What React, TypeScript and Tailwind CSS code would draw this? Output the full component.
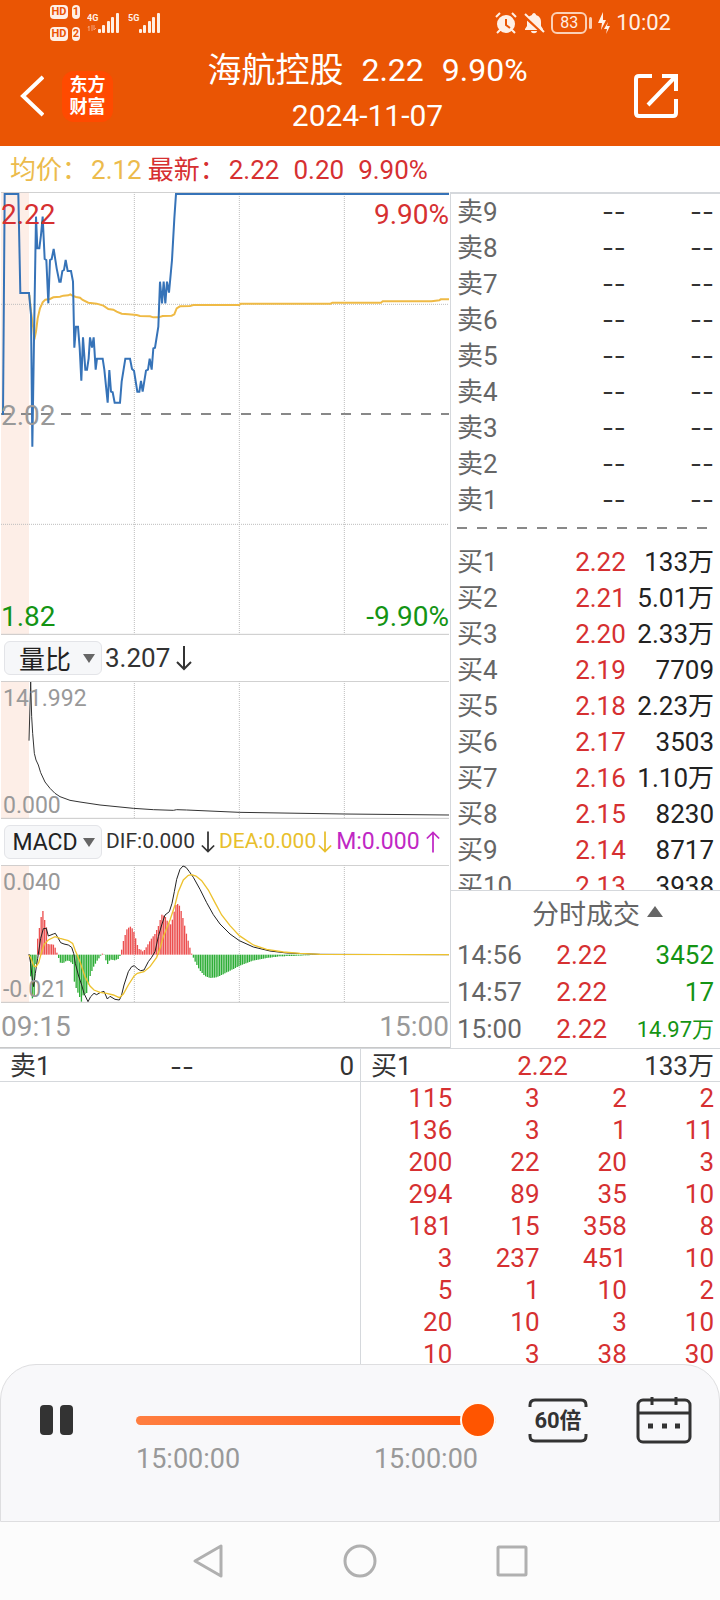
import { useState } from "react";

type Point = [number, number];
type Level = { label: string; price: string; volume: string };

const sells: Level[] = [9, 8, 7, 6, 5, 4, 3, 2, 1].map((n) => ({ label: `卖${n}`, price: "--", volume: "--" }));

const buys: Level[] = [
    { label: "买1", price: "2.22", volume: "133万" },
    { label: "买2", price: "2.21", volume: "5.01万" },
    { label: "买3", price: "2.20", volume: "2.33万" },
    { label: "买4", price: "2.19", volume: "7709" },
    { label: "买5", price: "2.18", volume: "2.23万" },
    { label: "买6", price: "2.17", volume: "3503" },
    { label: "买7", price: "2.16", volume: "1.10万" },
    { label: "买8", price: "2.15", volume: "8230" },
    { label: "买9", price: "2.14", volume: "8717" },
    { label: "买10", price: "2.13", volume: "3938" },
];

const trades = [
    { time: "14:56", price: "2.22", volume: "3452" },
    { time: "14:57", price: "2.22", volume: "17" },
    { time: "15:00", price: "2.22", volume: "14.97万" },
];

const queue = [
    [115, 3, 2, 2],
    [136, 3, 1, 11],
    [200, 22, 20, 3],
    [294, 89, 35, 10],
    [181, 15, 358, 8],
    [3, 237, 451, 10],
    [5, 1, 10, 2],
    [20, 10, 3, 10],
    [10, 3, 38, 30],
];

const priceLine: Point[] = [
    [9, 690], [14, 27], [55, 27], [61, 324], [87, 324], [93, 390], [97, 785], [103, 400], [108, 95], [112, 190], [118, 190],
    [123, 150], [128, 95], [134, 222], [139, 225], [145, 355], [150, 225], [155, 222], [161, 192], [170, 250], [178, 290],
    [182, 290], [187, 258], [192, 255], [197, 225], [203, 258], [213, 258], [219, 290], [223, 488], [228, 425], [234, 425],
    [239, 488], [244, 587], [249, 457], [256, 554], [261, 554], [266, 520], [270, 457], [276, 488], [281, 457], [287, 554],
    [291, 521], [308, 521], [313, 554], [323, 653], [328, 555], [333, 620], [338, 622], [344, 653], [360, 653], [365, 590],
    [376, 521], [390, 521], [396, 552], [402, 557], [412, 620], [418, 620], [423, 588], [428, 620], [438, 557], [444, 554],
    [449, 521], [455, 554], [460, 490], [465, 488], [475, 425], [480, 290], [486, 355], [491, 290], [496, 355], [501, 290],
    [507, 323], [516, 225], [523, 100], [528, 27], [1347, 27],
];

const averageLine: Point[] = [
    [88, 330], [93, 380], [100, 430], [103, 464], [108, 440], [113, 400], [120, 370], [128, 352], [136, 344], [150, 342],
    [160, 337], [180, 335], [190, 332], [205, 331], [211, 328], [217, 332], [228, 336], [240, 338], [248, 345], [265, 353],
    [290, 356], [310, 362], [325, 372], [340, 374], [350, 380], [365, 386], [385, 388], [410, 390], [420, 393], [450, 394],
    [460, 397], [475, 397], [488, 393], [515, 392], [523, 388], [530, 370], [540, 364], [570, 363], [580, 360], [718, 360],
    [722, 356], [992, 356], [997, 353], [1143, 353], [1148, 349], [1295, 349], [1318, 346], [1322, 343], [1347, 343],
];

const ratioLine: Point[] = [
    [87, 452], [92, 276], [95, 380], [98, 430], [103, 490], [108, 510], [115, 525], [122, 548], [135, 576], [150, 595],
    [165, 610], [180, 620], [210, 631], [240, 636], [300, 645], [400, 655], [460, 659], [520, 661], [530, 659], [560, 660],
    [718, 667], [1033, 672], [1347, 675],
];

const difLine: Point[] = [
    [87, 402], [92, 430], [97, 480], [101, 500], [106, 460], [113, 415], [122, 355], [130, 326], [139, 325], [145, 348],
    [160, 342], [166, 340], [172, 350], [182, 368], [192, 372], [205, 375], [215, 382], [221, 400], [226, 430], [235, 465],
    [245, 495], [252, 520], [264, 545], [272, 530], [282, 520], [290, 524], [300, 518], [312, 514], [322, 537], [330, 529],
    [345, 538], [358, 540], [364, 528], [372, 495], [385, 455], [395, 440], [403, 437], [413, 447], [422, 452], [432, 450],
    [445, 425], [455, 412], [465, 395], [475, 350], [485, 315], [495, 285], [508, 275], [516, 250], [523, 215], [530, 178],
    [540, 148], [549, 138], [558, 142], [568, 155], [580, 172], [600, 208], [620, 248], [640, 284], [660, 312], [690, 342],
    [718, 362], [760, 381], [810, 393], [860, 399], [960, 403], [1347, 404],
];

const deaLine: Point[] = [
    [87, 405], [93, 415], [101, 438], [108, 440], [116, 428], [125, 395], [133, 372], [145, 360], [165, 350], [180, 355],
    [205, 362], [218, 370], [226, 392], [240, 425], [255, 470], [270, 498], [282, 510], [300, 517], [320, 520], [340, 525],
    [358, 533], [370, 522], [385, 495], [403, 467], [412, 460], [432, 455], [450, 440], [470, 412], [480, 385], [490, 350],
    [510, 300], [525, 255], [535, 215], [550, 180], [565, 166], [575, 164], [588, 168], [605, 182], [625, 210], [645, 248],
    [665, 285], [690, 317], [718, 347], [760, 375], [800, 388], [850, 396], [900, 400], [960, 403], [1347, 404],
];

// histogram outline, sampled into bars below
const macdShape: Point[] = [
    [88, 0], [96, -130], [102, -135], [107, -40], [112, 42], [118, 78], [123, 110], [128, 135], [133, 108], [139, 85],
    [144, 32], [160, 30], [165, 22], [170, 8], [173, 0], [180, -24], [190, -25], [200, -18], [210, -20], [218, -28],
    [223, -80], [230, -105], [240, -130], [244, -142], [249, -122], [260, -115], [270, -65], [280, -38], [290, -20],
    [300, -6], [308, 4], [312, 0], [322, -30], [330, -15], [345, -17], [355, -13], [360, -4], [364, 10], [370, 40],
    [380, 75], [390, 85], [400, 75], [408, 45], [415, 18], [425, 14], [430, 8], [440, 25], [450, 42], [465, 62],
    [475, 85], [485, 120], [495, 115], [505, 95], [513, 90], [520, 115], [526, 148], [532, 153], [540, 145], [550, 105],
    [560, 60], [570, 20], [576, 0], [585, -20], [600, -48], [615, -64], [630, -70], [650, -68], [665, -61], [718, -34],
    [760, -18], [800, -10], [840, -5], [900, -3], [960, 0],
];

const toPoints = (points: Point[]) => points.map((p) => p.join(",")).join(" ");

const sampleAt = (points: Point[], x: number) => {
    const i = points.findIndex((p) => p[0] >= x);
    if (i <= 0) return 0;
    const [x0, y0] = points[i - 1];
    const [x1, y1] = points[i];
    return y0 + ((y1 - y0) * (x - x0)) / (x1 - x0);
};

const bars = Array.from({ length: 167 }, (_, i) => {
    const x = 92 + i * 5.25;
    return { x, value: Math.round(sampleAt(macdShape, x)) };
});

function Grid({ top, bottom }: { top: number; bottom: number }) {
    return (
        <>
            <rect x="3" y={top} width="84" height={bottom - top} fill="#fdeee7" />
            {[403, 718, 1033].map((x) => (
                <line key={x} x1={x} x2={x} y1={top} y2={bottom} stroke="#bdbdbd" strokeWidth="3" strokeDasharray="3 3" />
            ))}
            <path d={`M3 ${top + 1}H1347M3 ${bottom - 2}H1347`} stroke="#c8c8c8" strokeWidth="3" />
        </>
    );
}

function Arrow({ up, className }: { up?: boolean; className?: string }) {
    return (
        <svg viewBox="0 0 16 26" className={className} fill="none" stroke="currentColor" strokeWidth="2">
            <path d={up ? "M8 25V2M1 9l7-7 7 7" : "M8 1v23M1 17l7 7 7-7"} />
        </svg>
    );
}

function IndicatorSelect({ name, options, className }: { name: string; options: string[]; className: string }) {
    return (
        <div className="relative ml-1 h-[34px] w-[98px] shrink-0">
            <select
                aria-label={name}
                className={`h-full w-full appearance-none rounded-md border border-[#e3e4e8] bg-[#f6f7f9] pr-4 text-center text-[#222] ${className}`}
            >
                {options.map((o) => (
                    <option key={o}>{o}</option>
                ))}
            </select>
            <svg viewBox="0 0 12 9" className="pointer-events-none absolute top-[13px] right-[7px] h-[9px] w-3" fill="#666">
                <path d="M0 0h12L6 9z" />
            </svg>
        </div>
    );
}

function LevelTable({ levels, caption }: { levels: Level[]; caption: string }) {
    return (
        <table className="w-full table-fixed" aria-label={caption}>
            <tbody>
                {levels.map(({ label, price, volume }) => (
                    <tr key={label} className="h-9 leading-9">
                        <th scope="row" className="w-[30%] p-0 pl-[6px] text-left font-normal whitespace-nowrap text-[#666]">{label}</th>
                        <td className={price === "--" ? "w-[35%] p-0 text-right font-['Inter'] text-[#333]" : "w-[35%] p-0 text-right text-[#d63031]"}>
                            {price}
                        </td>
                        <td className={volume === "--" ? "p-0 pr-[6px] text-right font-['Inter'] text-[#333]" : "p-0 pr-[6px] text-right whitespace-nowrap text-[#222]"}>
                            {volume}
                        </td>
                    </tr>
                ))}
            </tbody>
        </table>
    );
}

function Signal({ label, faded }: { label: string; faded?: boolean }) {
    return (
        <svg viewBox="0 0 34 22" className="h-[22px] w-[34px]" fill="#fff0e6">
            <text x="0" y="9" fontSize="9" fontWeight="700" fontFamily="Roboto, sans-serif">{label}</text>
            {faded && <path d="M2 19v-5l-1 2M5 19v-6M7 13v5l2-2" stroke="#f4a27a" strokeWidth="1" fill="none" />}
            <rect x="11" y="17" width="3" height="4" rx="1" />
            <rect x="15" y="13" width="3" height="8" rx="1" />
            <rect x="20" y="9" width="3" height="12" rx="1" />
            <rect x="24" y="5" width="3" height="16" rx="1" />
            <rect x="29" y="1" width="3" height="20" rx="1" />
        </svg>
    );
}

function HdBadge({ n }: { n: string }) {
    return (
        <div className="flex gap-1 text-[11px] leading-[14px] font-bold text-[#ea5504]">
            <span className="w-[18px] rounded-sm bg-[#fff0e6] text-center">HD</span>
            <span className="w-2 rounded-sm bg-[#fff0e6] text-center">{n}</span>
        </div>
    );
}

function StatusBar() {
    return (
        <div className="flex h-[46px] items-center justify-between pr-[49px] pl-[50px] text-[#fff0e6]">
            <div className="flex items-center gap-[7px]">
                <div className="flex flex-col gap-2">
                    <HdBadge n="1" />
                    <HdBadge n="2" />
                </div>
                <Signal label="4G" faded />
                <Signal label="5G" />
            </div>
            <div className="flex items-center gap-[6px]">
                <svg viewBox="0 0 22 22" className="size-[22px]" fill="none" stroke="currentColor" strokeWidth="2">
                    <circle cx="11" cy="12" r="9" fill="currentColor" stroke="none" />
                    <path d="M1 5l4-4M21 5l-4-4M5 18l-3 3M17 18l3 3" />
                    <path d="M11 7v6l4 3" stroke="#ea5504" />
                </svg>
                <svg viewBox="0 0 22 22" className="size-[22px]" fill="currentColor">
                    <path d="M11 1c1 0 2 1 2 2 3 1 5 3 5 7v4l2 3v1H2v-1l2-3v-4c0-4 2-6 5-7 0-1 1-2 2-2zM8 19h6c0 3-6 3-6 0z" />
                    <path d="M1 4l19 17" stroke="#ea5504" strokeWidth="3" />
                    <path d="M2 2l19 18" stroke="currentColor" strokeWidth="2" />
                </svg>
                <div className="flex items-center gap-[2px]">
                    <span className="h-[22px] w-9 rounded-md border-2 border-[#fbd0b6] text-center text-base leading-[18px]">83</span>
                    <span className="h-3 w-[3px] rounded-sm bg-[#fbd0b6]" />
                </div>
                <svg viewBox="0 0 12 22" className="h-[22px] w-3" fill="currentColor">
                    <path d="M5 0L0 11h4l-1 7 5-10H5zM10 10l-4 7h3l-1 5 4-8h-3z" />
                </svg>
                <time className="text-[22px] leading-6">10:02</time>
            </div>
        </div>
    );
}

function TopBar() {
    return (
        <div className="flex h-[100px] items-center pr-[42px] pl-5 text-white">
            <button aria-label="返回" className="mr-[18px]">
                <svg viewBox="0 0 24 42" className="h-[42px] w-6" fill="none" stroke="currentColor" strokeWidth="4">
                    <path d="M23 2L3 21l20 19" />
                </svg>
            </button>
            <div className="flex h-[51px] w-[51px] flex-col items-center justify-center rounded-xl bg-[#ff4a00] text-lg leading-[22px] font-bold">
                <span>东方</span>
                <span>财富</span>
            </div>
            <div className="flex flex-1 flex-col items-center pb-[6px] leading-[45px]">
                <h1 className="flex gap-[18px] text-[32px]">
                    <span className="text-[34px]">海航控股</span>
                    <span>2.22</span>
                    <span>9.90%</span>
                </h1>
                <p className="text-[30px]">2024-11-07</p>
            </div>
            <button aria-label="分享" className="pl-3">
                <svg viewBox="0 0 44 44" className="size-11" fill="none" stroke="currentColor" strokeWidth="4">
                    <path d="M18 2H5Q2 2 2 5v34q0 3 3 3h34q3 0 3-3V25M28 2h14v15M41 3L14 31" />
                </svg>
            </button>
        </div>
    );
}

function Charts() {
    return (
        <div className="w-5/8">
            <div className="relative">
                <svg viewBox="0 21 1350 1329" className="block w-full" fill="none">
                    <Grid top={21} bottom={1350} />
                    <path d="M3 358H1347M3 1018H1347" stroke="#bdbdbd" strokeWidth="3" strokeDasharray="3 3" />
                    <path d="M3 687H1347" stroke="#888" strokeWidth="6" strokeDasharray="30 30" />
                    <polyline points={toPoints(averageLine)} stroke="#efba45" strokeWidth="6" />
                    <polyline points={toPoints(priceLine)} stroke="#3673b8" strokeWidth="6" />
                </svg>
                <div className="absolute inset-x-px inset-y-0 text-[28px] leading-8">
                    <div className="absolute inset-x-0 top-[7px] flex justify-between text-[#d63031]">
                        <span>2.22</span>
                        <span>9.90%</span>
                    </div>
                    <span className="absolute top-1/2 left-0 -mt-[14px] text-[#999]">2.02</span>
                    <div className="absolute inset-x-0 bottom-[2px] flex justify-between text-[#149414]">
                        <span>1.82</span>
                        <span>-9.90%</span>
                    </div>
                </div>
            </div>

            <div className="flex h-[46px] items-center text-[#333]">
                <IndicatorSelect name="指标一" options={["量比", "成交量"]} className="font-['Noto_Sans_CJK_SC'] text-[26px] leading-8" />
                <span className="ml-[3px]">3.207</span>
                <Arrow className="ml-[6px] h-[26px] w-4" />
            </div>

            <div className="relative">
                <svg viewBox="0 273 1350 414" className="block w-full" fill="none">
                    <Grid top={273} bottom={687} />
                    <polyline points={toPoints(ratioLine)} stroke="#333" strokeWidth="3" />
                </svg>
                <div className="absolute inset-y-0 left-[3px] flex flex-col justify-between pt-[6px] pb-px text-[23px] leading-6 text-[#999]">
                    <span>141.992</span>
                    <span>0.000</span>
                </div>
            </div>

            <div className="flex h-[46px] items-center text-[21px]">
                <IndicatorSelect name="指标二" options={["MACD", "KDJ"]} className="text-[23px]" />
                <span className="ml-1 text-[#333]">DIF:0.000</span>
                <Arrow className="ml-[6px] h-6 w-[14px] shrink-0 text-[#333]" />
                <span className="ml-1 text-[#e8bf2c]">DEA:0.000</span>
                <Arrow className="ml-[2px] h-6 w-[14px] shrink-0 text-[#e8bf2c]" />
                <span className="ml-1 text-[23px] text-[#c028c4]">M:0.000</span>
                <Arrow up className="ml-[6px] h-6 w-[14px] shrink-0 text-[#c028c4]" />
            </div>

            <div className="relative">
                <svg viewBox="0 135 1350 414" className="block w-full" fill="none">
                    <Grid top={135} bottom={549} />
                    {bars.map(({ x, value }) => (
                        <rect
                            key={x}
                            x={x - 2}
                            y={value > 0 ? 404 - value : 404}
                            width="4"
                            height={Math.abs(value)}
                            fill={value > 0 ? "#ec5050" : "#2fae38"}
                        />
                    ))}
                    <polyline points={toPoints(difLine)} stroke="#222" strokeWidth="3" />
                    <polyline points={toPoints(deaLine)} stroke="#edc22f" strokeWidth="4" />
                </svg>
                <div className="absolute inset-y-0 left-[3px] flex flex-col justify-between pt-[6px] pb-px text-[23px] leading-6 text-[#999]">
                    <span>0.040</span>
                    <span>-0.021</span>
                </div>
            </div>

            <div className="flex h-[45px] items-center justify-between border-b border-[#c8c8c8] px-px pt-1 text-[28px] text-[#999]">
                <time>09:15</time>
                <time>15:00</time>
            </div>
        </div>
    );
}

function OrderBook() {
    const [open, setOpen] = useState(true);

    return (
        <div className="flex w-3/8 flex-col border-t-2 border-l border-[#d5d8dc]">
            <div className="flex-1 basis-0 overflow-hidden">
                <LevelTable levels={sells} caption="卖盘" />
                <svg className="block h-[26px] w-full" aria-hidden="true">
                    <line x1="6" x2="97%" y1="10" y2="10" stroke="#888" strokeWidth="2" strokeDasharray="10 10" />
                </svg>
                <LevelTable levels={buys} caption="买盘" />
            </div>
            <button
                onClick={() => setOpen(!open)}
                className="flex h-[47px] items-center justify-center gap-[7px] border-t border-[#d5d8dc] pt-[2px] pl-6 text-[27px] text-[#666]"
            >
                分时成交
                <svg viewBox="0 0 16 11" className="mb-2 h-[11px] w-4" fill="#666">
                    <path d="M8 0l8 11H0z" />
                </svg>
            </button>
            {open && (
                <table className="w-full table-fixed" aria-label="分时成交">
                    <tbody>
                        {trades.map(({ time, price, volume }) => (
                            <tr key={time} className="h-[37px] leading-[37px]">
                                <td className="w-[28%] p-0 pl-[6px] text-[#666]">{time}</td>
                                <td className="w-[30%] p-0 text-right text-[#d63031]">{price}</td>
                                <td className={volume.includes("万") ? "p-0 pr-[6px] text-right text-[22px] text-[#149414]" : "p-0 pr-[6px] text-right text-[#149414]"}>
                                    {volume}
                                </td>
                            </tr>
                        ))}
                    </tbody>
                </table>
            )}
        </div>
    );
}

function Queues() {
    return (
        <div className="grid grid-cols-2 text-[#333]">
            <section className="border-t border-[#d5d8dc]">
                <div className="flex h-[33px] items-center justify-between border-b border-[#d5d8dc] pt-[2px] pr-[6px] pl-[10px]">
                    <span className="w-1/3">卖1</span>
                    <span className="w-1/3 text-center font-['Inter']">--</span>
                    <span className="w-1/3 text-right">0</span>
                </div>
            </section>
            <section className="border-t border-l border-[#d5d8dc]">
                <div className="flex h-[33px] items-center justify-between border-b border-[#d5d8dc] pt-[2px] pr-[6px] pl-[10px]">
                    <span className="w-1/3">买1</span>
                    <span className="w-1/3 text-center text-[#d63031]">2.22</span>
                    <span className="w-1/3 text-right">133万</span>
                </div>
                <div className="pr-[6px] pl-1">
                    <table className="w-full table-fixed text-right text-[#d63031]" aria-label="买1队列">
                        <tbody>
                            {queue.map((row, i) => (
                                <tr key={i} className="h-8 leading-8">
                                    {row.map((n, j) => (
                                        <td key={j} className="p-0">{n}</td>
                                    ))}
                                </tr>
                            ))}
                        </tbody>
                    </table>
                </div>
            </section>
        </div>
    );
}

function Player() {
    const [position, setPosition] = useState(100);

    return (
        <div className="relative -mt-[6px] flex items-start rounded-t-[36px] border border-[#dedee0] bg-[#f8f8fa] pt-[31px] pr-[27px] pb-[47px] pl-[39px]">
            <button aria-label="暂停" className="flex h-12 items-center gap-[7px]">
                <span className="h-[30px] w-[13px] rounded-sm bg-[#333]" />
                <span className="h-[30px] w-[13px] rounded-sm bg-[#333]" />
            </button>
            <div className="ml-[63px] flex-1">
                <div className="flex h-12 items-center">
                    <input
                        type="range"
                        aria-label="播放进度"
                        value={position}
                        onChange={(e) => setPosition(Number(e.target.value))}
                        className="h-[9px] w-full appearance-none rounded-full bg-linear-to-r from-[#ff7e40] to-[#ff5500] [&::-webkit-slider-thumb]:size-9 [&::-webkit-slider-thumb]:appearance-none [&::-webkit-slider-thumb]:rounded-full [&::-webkit-slider-thumb]:border-2 [&::-webkit-slider-thumb]:border-[#fff8f2] [&::-webkit-slider-thumb]:bg-[#ff5500]"
                    />
                </div>
                <div className="flex justify-between pr-[18px] text-[27px] leading-[30px] text-[#999]">
                    <time>15:00:00</time>
                    <time>15:00:00</time>
                </div>
            </div>
            <button className="relative ml-8 flex h-12 w-[60px] items-center justify-center text-[22px] font-bold text-[#333]">
                <svg viewBox="0 0 60 48" className="absolute inset-0 h-12 w-[60px]" fill="none" stroke="currentColor" strokeWidth="3">
                    <path d="M2 11V9q0-5 5-5h46q5 0 5 5v2M2 38v2q0 5 5 5h46q5 0 5-5v-2" />
                </svg>
                60倍
            </button>
            <button aria-label="选择日期" className="ml-12">
                <svg viewBox="0 0 56 48" className="h-12 w-14" fill="none" stroke="#333" strokeWidth="3">
                    <rect x="2" y="4" width="52" height="42" rx="5" />
                    <path d="M2 17h52M16 1v8M40 1v8" />
                    <path d="M12 30h5M26 30h5M39 30h5" strokeWidth="5" />
                </svg>
            </button>
        </div>
    );
}

export default function App() {
    return (
        <div className="bg-white font-['Roboto','Noto_Sans_CJK_SC',sans-serif] text-[26px]">
            <header className="bg-[#ea5504]">
                <StatusBar />
                <TopBar />
            </header>

            <main>
                <div className="flex h-[46px] items-center gap-[14px] pt-[2px] pl-[10px] text-[#d63031]">
                    <div className="flex gap-[6px]">
                        <div className="flex gap-[3px] text-[#ecbb4c]">
                            <span>均价：</span>
                            <span>2.12</span>
                        </div>
                        <div className="flex gap-[3px]">
                            <span>最新：</span>
                            <span>2.22</span>
                        </div>
                    </div>
                    <span>0.20</span>
                    <span>9.90%</span>
                </div>
                <div className="flex">
                    <Charts />
                    <OrderBook />
                </div>
                <Queues />
                <Player />
            </main>

            <nav className="flex h-[78px] items-center justify-center gap-[118px] bg-[#fcfcfc]">
                <button aria-label="后退">
                    <svg viewBox="0 0 32 36" className="h-9 w-8" fill="none" stroke="#b0b0b0" strokeWidth="3" strokeLinejoin="round">
                        <path d="M29 3v30L3 18z" />
                    </svg>
                </button>
                <button aria-label="主屏幕">
                    <svg viewBox="0 0 36 36" className="size-9" fill="none" stroke="#b0b0b0" strokeWidth="3">
                        <circle cx="18" cy="18" r="15" />
                    </svg>
                </button>
                <button aria-label="最近任务">
                    <svg viewBox="0 0 32 32" className="size-8" fill="none" stroke="#b0b0b0" strokeWidth="3">
                        <rect x="2" y="2" width="28" height="28" rx="1" />
                    </svg>
                </button>
            </nav>
        </div>
    );
}
